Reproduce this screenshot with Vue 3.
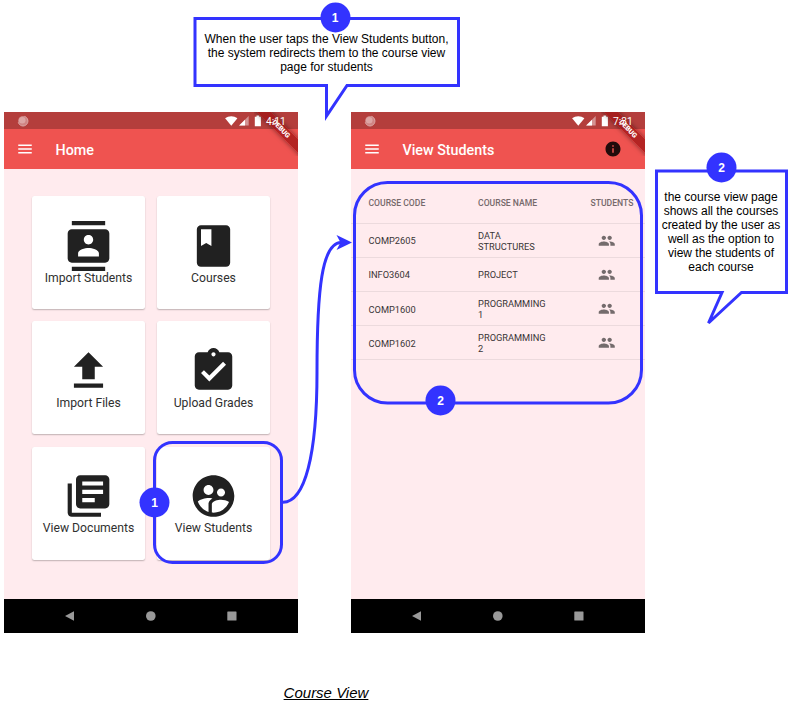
<script setup>
const tiles = [
  { label: 'Import Students', d: 'M20 0H4v2h16V0zM4 24h16v-2H4v2zM20 4H4c-1.100 0-2 .9-2 2v12c0 1.100.9 2 2 2h16c1.100 0 2-.9 2-2V6c0-1.100-.9-2-2-2zm-8 2.750c1.240 0 2.250 1.010 2.250 2.250s-1.010 2.250-2.250 2.250S9.750 10.240 9.750 9 10.760 6.750 12 6.750zM17 17H7v-1.500c0-1.670 3.330-2.500 5-2.500s5 .83 5 2.500V17z' },
  { label: 'Courses', d: 'M18 2H6c-1.100 0-2 .9-2 2v16c0 1.100.9 2 2 2h12c1.100 0 2-.9 2-2V4c0-1.100-.9-2-2-2zM6 4h5v8l-2.500-1.500L6 12V4z' },
  { label: 'Import Files', d: 'M9 16h6v-6h4l-7-7-7 7h4zm-4 2h14v2H5z' },
  { label: 'Upload Grades', d: 'M19 3h-4.180C14.400 1.840 13.300 1 12 1c-1.300 0-2.400.84-2.820 2H5c-1.100 0-2 .9-2 2v14c0 1.100.9 2 2 2h14c1.100 0 2-.9 2-2V5c0-1.100-.9-2-2-2zm-7 0c.55 0 1 .45 1 1s-.45 1-1 1-1-.45-1-1 .45-1 1-1zm-2 14l-4-4 1.410-1.410L10 14.170l6.590-6.590L18 9l-8 8z' },
  { label: 'View Documents', d: 'M4 6H2v14c0 1.100.9 2 2 2h14v-2H4V6zm16-4H8c-1.100 0-2 .9-2 2v12c0 1.100.9 2 2 2h12c1.100 0 2-.9 2-2V4c0-1.100-.9-2-2-2zm-1 9H9V9h10v2zm-4 4H9v-2h6v2zm4-8H9V5h10v2z' },
  { label: 'View Students', d: 'M12 2C6.480 2 2 6.480 2 12s4.480 10 10 10 10-4.480 10-10S17.520 2 12 2zm3.610 6.340c1.070 0 1.930.86 1.930 1.930 0 1.070-.86 1.930-1.930 1.930-1.070 0-1.930-.86-1.930-1.930-.01-1.070.86-1.930 1.930-1.930zm-6-1.580c1.300 0 2.360 1.060 2.360 2.360 0 1.300-1.060 2.360-2.360 2.360s-2.360-1.060-2.360-2.360c0-1.310 1.050-2.360 2.360-2.360zm0 9.130v3.750c-2.400-.75-4.300-2.600-5.140-4.960 1.050-1.120 3.670-1.690 5.140-1.690.53 0 1.200.08 1.900.22-1.640.87-1.900 2.020-1.900 2.680zM12 20c-.27 0-.53-.01-.79-.04v-4.070c0-1.420 2.940-2.130 4.400-2.130 1.070 0 2.920.39 3.840 1.150C18.280 17.880 15.390 20 12 20z' },
]
const rows = [
  ['COMP2605', 'DATA STRUCTURES'],
  ['INFO3604', 'PROJECT'],
  ['COMP1600', 'PROGRAMMING 1'],
  ['COMP1602', 'PROGRAMMING 2'],
]
const phones = [
  { id: 'home', title: 'Home', time: '4:11' },
  { id: 'students', title: 'View Students', time: '7:31' },
]
</script>

<template>
  <main class="canvas">
    <section v-for="p in phones" :key="p.id" class="phone" :class="p.id">
      <div class="status">
        <svg class="sync" viewBox="0 0 12 12"><circle cx="6" cy="6" r="4.900" fill="#cf8483" /><path d="M7.500 1.400a4.900 4.900 0 1 1-6.200 6" fill="none" stroke="#dfa9a8" stroke-width="1" /><circle cx="5.200" cy="5.200" r="3.300" fill="#dda5a4" /></svg>
        <svg class="signals" viewBox="0 0 38 12">
          <path d="M.1 3.300C3.500.4 9 .4 12.400 3.300L6.300 10.800z" fill="#fff" />
          <path d="M23.700 1v9.600h-9.600z" fill="#d49393" /><path d="M20 4.700v5.900h-5.900z" fill="#fff" />
          <path d="M29.800 1.700h1.700V.5h2.700v1.200h1.700v9.500h-6.100z" fill="#fff" />
        </svg>
        <span class="time">{{ p.time }}</span>
      </div>
      <header class="appbar">
        <svg class="menu" viewBox="0 0 24 24"><path d="M3 18h18v-2H3v2zm0-5h18v-2H3v2zm0-7v2h18V6H3z" fill="#fff" /></svg>
        <h1>{{ p.title }}</h1>
        <svg v-if="p.id === 'students'" class="info" viewBox="0 0 24 24"><path d="M12 2C6.480 2 2 6.480 2 12s4.480 10 10 10 10-4.480 10-10S17.520 2 12 2zm1 15h-2v-6h2v6zm0-8h-2V7h2v2z" fill="#210b0b" /></svg>
      </header>
      <div class="corner"><span class="debug">DEBUG</span></div>

      <div v-if="p.id === 'home'" class="body tiles">
        <article v-for="t in tiles" :key="t.label" class="tile">
          <svg viewBox="-.24 0 24.480 24"><path :d="t.d" fill="#212121" /></svg>
          <span>{{ t.label }}</span>
        </article>
      </div>
      <div v-else class="body">
        <div class="row head"><span>COURSE CODE</span><span>COURSE NAME</span><span>STUDENTS</span></div>
        <div v-for="r in rows" :key="r[0]" class="row">
          <span>{{ r[0] }}</span>
          <span class="name">{{ r[1] }}</span>
          <svg viewBox="0 0 24 24"><path d="M16 11c1.660 0 2.990-1.340 2.990-3S17.660 5 16 5c-1.660 0-3 1.340-3 3s1.340 3 3 3zm-8 0c1.660 0 2.990-1.340 2.990-3S9.660 5 8 5C6.340 5 5 6.340 5 8s1.340 3 3 3zm0 2c-2.330 0-7 1.170-7 3.500V19h14v-2.500c0-2.330-4.670-3.500-7-3.500zm8 0c-.29 0-.62.02-.97.05 1.160.84 1.970 1.970 1.970 3.450V19h6v-2.500c0-2.330-4.670-3.500-7-3.500z" fill="#746b6c" /></svg>
        </div>
      </div>

      <nav class="nav">
        <svg viewBox="0 0 12 12"><path d="M1 6 10 1.200v9.600z" /></svg>
        <svg viewBox="0 0 12 12"><circle cx="5.800" cy="6" r="4.800" /></svg>
        <svg viewBox="0 0 12 12"><rect x="1.300" y="1.400" width="9.200" height="9.200" rx=".5" /></svg>
      </nav>
    </section>

    <svg class="overlay" viewBox="0 0 789 704" fill="none" stroke="#3333ff" stroke-width="3">
      <path d="M195 18.500H458.500V85.500H347L326.500 116V85.500H195Z" fill="#fff" />
      <path d="M656.500 171H786.500V292.500H741.500L708.500 323 722 292.500H656.500Z" fill="#fff" />
      <rect x="154.500" y="442.500" width="127" height="120" rx="18" />
      <rect x="354.500" y="182.500" width="287" height="220.500" rx="33" />
      <path d="M283 502.300C305 502 317 455 317 372S322 243 341 242.500" />
      <path d="M352 242.500 336.500 250 340.500 242.500 336.500 235Z" fill="#3333ff" stroke="none" />
    </svg>
    <p class="note note-a">When the user taps the View Students button,<br>the system redirects them to the course view<br>page for students</p>
    <p class="note note-b">the course view page<br>shows all the courses<br>created by the user as<br>well as the option to<br>view the students of<br>each course</p>
    <b class="badge b1">1</b>
    <b class="badge b2">1</b>
    <b class="badge b3">2</b>
    <b class="badge b4">2</b>
    <p class="caption">Course View</p>
  </main>
</template>

<style>
body { margin: 0; background: #fff; }
</style>

<style scoped>
.canvas { position: relative; width: 789px; height: 704px; overflow: hidden; font-family: "Liberation Sans", Arial, sans-serif; }
.phone { position: absolute; top: 112px; width: 294px; height: 521px; display: flex; flex-direction: column; overflow: hidden; font-family: Roboto, sans-serif; background: #ffebee; }
.home { left: 4px; }
.students { left: 351px; }
.status { height: 17px; box-sizing: border-box; display: flex; align-items: center; padding: 0 12px 0 13px; background: #b43e3c; }
.sync { width: 12px; height: 12px; }
.signals { width: 38px; height: 12px; margin-left: auto; }
.time { position: relative; z-index: 2; width: 20px; margin: 1px 0 0 3px; color: #fff; font-size: 10.300px; line-height: 17px; white-space: nowrap; }
.appbar { height: 40px; box-sizing: border-box; display: flex; align-items: center; padding: 0 23px 0 11.500px; background: #ef5350; }
.menu { width: 18px; height: 18px; }
h1 { margin: 1px 0 0 22px; color: #fff; font-size: 14.300px; font-weight: 500; line-height: 20px; }
.info { width: 18px; height: 18px; margin-left: auto; }
.corner { position: absolute; z-index: 1; top: 0; right: 0; width: 44px; height: 44px; overflow: hidden; }
.debug { position: absolute; left: -13px; top: 12px; width: 80px; height: 10px; transform: rotate(45deg); background: rgba(160, 20, 20, .75); box-shadow: 0 0 5px rgba(0, 0, 0, .5); color: #fff; font-size: 6.900px; font-weight: 900; line-height: 10px; text-align: center; }
.body { flex: 1; }
.tiles { display: grid; grid-template-columns: 113px 113px; grid-auto-rows: 113px; gap: 12.200px 12px; padding: 27.300px 0 0 28px; }
.tile { display: flex; flex-direction: column; align-items: center; justify-content: center; box-sizing: border-box; padding-top: 1px; border-radius: 2.500px; background: #fff; box-shadow: 0 1px 1.500px rgba(0, 0, 0, .25); color: #303030; font-size: 12.200px; line-height: 15px; }
.tile svg { width: 51px; height: 50px; }
.row { display: grid; grid-template-columns: 109.600px 112.400px 1fr; align-items: center; height: 34.150px; box-sizing: border-box; padding: 1px 0 0 17.500px; border-bottom: 1px solid #ecdadd; color: #3a3536; font-size: 9.250px; line-height: 11px; }
.head { height: 54.700px; padding-top: 15.500px; color: #75696b; font-size: 8.600px; font-weight: 500; }
.name { width: 72px; }
.row svg { width: 17.500px; height: 17.500px; margin-left: 8px; }
.nav { height: 34px; display: flex; align-items: center; justify-content: space-between; box-sizing: border-box; padding: 0 60px; background: #000; }
.nav svg { width: 12px; height: 12px; fill: #999; }
.overlay { position: absolute; inset: 0; width: 789px; height: 704px; }
.note { position: absolute; margin: 0; color: #000; font-size: 12px; line-height: 14px; text-align: center; white-space: nowrap; }
.note-a { left: 195px; top: 32px; width: 263px; }
.note-b { left: 656px; top: 190px; width: 130px; }
.badge { position: absolute; width: 30px; height: 30px; border-radius: 50%; background: #3333ff; color: #fff; font-size: 12px; line-height: 30px; text-align: center; transform: translate(.5px, .5px); }
.b1 { left: 319.500px; top: 2px; }
.b2 { left: 139px; top: 487px; }
.b3 { left: 425px; top: 385px; }
.b4 { left: 706px; top: 152px; }
.caption { position: absolute; left: 226px; top: 684px; width: 200px; margin: 0; color: #000; font-size: 15px; font-style: italic; line-height: 18px; text-align: center; text-decoration: underline; }
</style>
